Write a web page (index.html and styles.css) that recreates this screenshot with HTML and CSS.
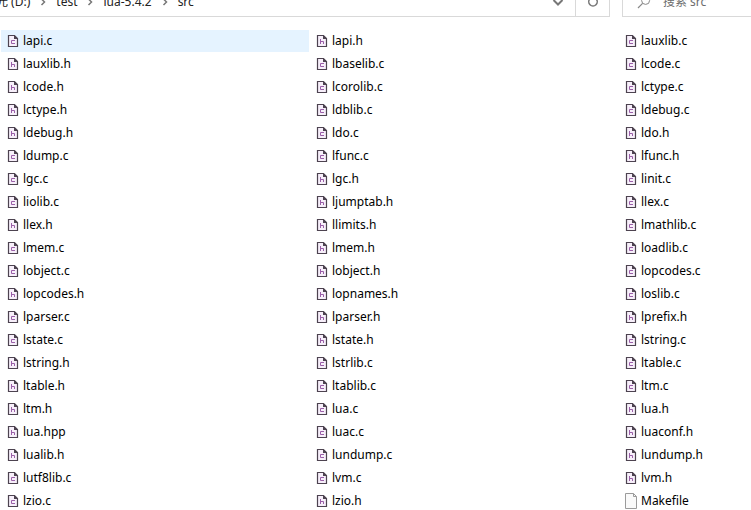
FILE: index.html
```html
<!DOCTYPE html>
<html lang="zh-CN">
<head>
<meta charset="utf-8">
<title>src</title>
<link rel="stylesheet" href="styles.css">
</head>
<body>
<svg class="sprite" aria-hidden="true">
  <symbol id="page" viewBox="0 0 12 14">
    <path d="M1.5 1.5H7.5L10.5 4.5V12.5H1.5Z" fill="#f7effa" stroke="#4d4350" stroke-width="1.2"/>
    <path d="M7 1L11 5H7Z" fill="#4d4350"/>
  </symbol>
  <symbol id="c" viewBox="0 0 12 14">
    <use href="#page"/>
    <path d="M8 6.5H4.5V9.5H8" fill="none" stroke="#9a5fa8"/>
  </symbol>
  <symbol id="h" viewBox="0 0 12 14">
    <use href="#page"/>
    <path d="M4.5 5V10M4.5 7.5H7.5V10" fill="none" stroke="#9a5fa8"/>
  </symbol>
  <symbol id="blank" viewBox="0 0 12 16">
    <path d="M.5 .5H8.5L11.5 3.5V15.5H.5Z" fill="#fafafa" stroke="#9b9b9b"/>
    <path d="M8.5 .5V3.5H11.5" fill="none" stroke="#9b9b9b"/>
  </symbol>
  <symbol id="chevron" viewBox="0 0 6 8">
    <path d="M1.5 1L4.5 4L1.5 7" fill="none" stroke="#777" stroke-width="1.5"/>
  </symbol>
</svg>
<header class="toolbar">
  <div class="address">
    <nav class="crumbs">
      <a class="crumb" href="#">光 (D:)</a>
      <svg class="chevron"><use href="#chevron"/></svg>
      <a class="crumb" href="#">test</a>
      <svg class="chevron"><use href="#chevron"/></svg>
      <a class="crumb" href="#">lua-5.4.2</a>
      <svg class="chevron"><use href="#chevron"/></svg>
      <a class="crumb" href="#">src</a>
    </nav>
    <button class="tool" aria-label="History"><svg width="12" height="8" viewBox="0 0 12 8"><path d="M1.5 2L6 6.5L10.5 2" fill="none" stroke="#777" stroke-width="2"/></svg></button>
    <button class="tool refresh" aria-label="Refresh"><svg width="12" height="12" viewBox="0 0 12 12"><path d="M3 2.8A4.2 4.2 0 1 0 9 2.8M6 1H10V5" fill="none" stroke="#777" stroke-width="1.6"/></svg></button>
  </div>
  <label class="search">
    <svg width="14" height="14" viewBox="0 0 14 14"><path d="M1 13L5.6 8.4" fill="none" stroke="#888" stroke-width="1.2"/><circle cx="8.6" cy="5.4" r="4" fill="none" stroke="#888"/></svg>
    <input class="query" type="search" aria-label="搜索 src" placeholder="搜索 src">
  </label>
</header>
<main>
<ul class="files">
  <li class="file selected"><svg class="icon"><use href="#c"/></svg>lapi.c</li>
  <li class="file"><svg class="icon"><use href="#h"/></svg>lauxlib.h</li>
  <li class="file"><svg class="icon"><use href="#h"/></svg>lcode.h</li>
  <li class="file"><svg class="icon"><use href="#h"/></svg>lctype.h</li>
  <li class="file"><svg class="icon"><use href="#h"/></svg>ldebug.h</li>
  <li class="file"><svg class="icon"><use href="#c"/></svg>ldump.c</li>
  <li class="file"><svg class="icon"><use href="#c"/></svg>lgc.c</li>
  <li class="file"><svg class="icon"><use href="#c"/></svg>liolib.c</li>
  <li class="file"><svg class="icon"><use href="#h"/></svg>llex.h</li>
  <li class="file"><svg class="icon"><use href="#c"/></svg>lmem.c</li>
  <li class="file"><svg class="icon"><use href="#c"/></svg>lobject.c</li>
  <li class="file"><svg class="icon"><use href="#h"/></svg>lopcodes.h</li>
  <li class="file"><svg class="icon"><use href="#c"/></svg>lparser.c</li>
  <li class="file"><svg class="icon"><use href="#c"/></svg>lstate.c</li>
  <li class="file"><svg class="icon"><use href="#h"/></svg>lstring.h</li>
  <li class="file"><svg class="icon"><use href="#h"/></svg>ltable.h</li>
  <li class="file"><svg class="icon"><use href="#h"/></svg>ltm.h</li>
  <li class="file"><svg class="icon"><use href="#h"/></svg>lua.hpp</li>
  <li class="file"><svg class="icon"><use href="#h"/></svg>lualib.h</li>
  <li class="file"><svg class="icon"><use href="#c"/></svg>lutf8lib.c</li>
  <li class="file"><svg class="icon"><use href="#c"/></svg>lzio.c</li>
  <li class="file"><svg class="icon"><use href="#h"/></svg>lapi.h</li>
  <li class="file"><svg class="icon"><use href="#c"/></svg>lbaselib.c</li>
  <li class="file"><svg class="icon"><use href="#c"/></svg>lcorolib.c</li>
  <li class="file"><svg class="icon"><use href="#c"/></svg>ldblib.c</li>
  <li class="file"><svg class="icon"><use href="#c"/></svg>ldo.c</li>
  <li class="file"><svg class="icon"><use href="#c"/></svg>lfunc.c</li>
  <li class="file"><svg class="icon"><use href="#h"/></svg>lgc.h</li>
  <li class="file"><svg class="icon"><use href="#h"/></svg>ljumptab.h</li>
  <li class="file"><svg class="icon"><use href="#h"/></svg>llimits.h</li>
  <li class="file"><svg class="icon"><use href="#h"/></svg>lmem.h</li>
  <li class="file"><svg class="icon"><use href="#h"/></svg>lobject.h</li>
  <li class="file"><svg class="icon"><use href="#h"/></svg>lopnames.h</li>
  <li class="file"><svg class="icon"><use href="#h"/></svg>lparser.h</li>
  <li class="file"><svg class="icon"><use href="#h"/></svg>lstate.h</li>
  <li class="file"><svg class="icon"><use href="#c"/></svg>lstrlib.c</li>
  <li class="file"><svg class="icon"><use href="#c"/></svg>ltablib.c</li>
  <li class="file"><svg class="icon"><use href="#c"/></svg>lua.c</li>
  <li class="file"><svg class="icon"><use href="#c"/></svg>luac.c</li>
  <li class="file"><svg class="icon"><use href="#c"/></svg>lundump.c</li>
  <li class="file"><svg class="icon"><use href="#c"/></svg>lvm.c</li>
  <li class="file"><svg class="icon"><use href="#h"/></svg>lzio.h</li>
  <li class="file"><svg class="icon"><use href="#c"/></svg>lauxlib.c</li>
  <li class="file"><svg class="icon"><use href="#c"/></svg>lcode.c</li>
  <li class="file"><svg class="icon"><use href="#c"/></svg>lctype.c</li>
  <li class="file"><svg class="icon"><use href="#c"/></svg>ldebug.c</li>
  <li class="file"><svg class="icon"><use href="#h"/></svg>ldo.h</li>
  <li class="file"><svg class="icon"><use href="#h"/></svg>lfunc.h</li>
  <li class="file"><svg class="icon"><use href="#c"/></svg>linit.c</li>
  <li class="file"><svg class="icon"><use href="#c"/></svg>llex.c</li>
  <li class="file"><svg class="icon"><use href="#c"/></svg>lmathlib.c</li>
  <li class="file"><svg class="icon"><use href="#c"/></svg>loadlib.c</li>
  <li class="file"><svg class="icon"><use href="#c"/></svg>lopcodes.c</li>
  <li class="file"><svg class="icon"><use href="#c"/></svg>loslib.c</li>
  <li class="file"><svg class="icon"><use href="#h"/></svg>lprefix.h</li>
  <li class="file"><svg class="icon"><use href="#c"/></svg>lstring.c</li>
  <li class="file"><svg class="icon"><use href="#c"/></svg>ltable.c</li>
  <li class="file"><svg class="icon"><use href="#c"/></svg>ltm.c</li>
  <li class="file"><svg class="icon"><use href="#h"/></svg>lua.h</li>
  <li class="file"><svg class="icon"><use href="#h"/></svg>luaconf.h</li>
  <li class="file"><svg class="icon"><use href="#h"/></svg>lundump.h</li>
  <li class="file"><svg class="icon"><use href="#h"/></svg>lvm.h</li>
  <li class="file"><svg class="icon plain"><use href="#blank"/></svg>Makefile</li>
</ul>
</main>
</body>
</html>
```
FILE: styles.css
```css
* { box-sizing: border-box; }
body {
  margin: 0;
  overflow: hidden;
  background: #fff;
  color: #000;
  font: 12px/16px "Noto Sans", "Noto Sans CJK SC", sans-serif;
}
.sprite { display: none; }

.toolbar {
  display: flex;
  align-items: flex-end;
  gap: 12px;
  height: 17px;
  overflow: hidden;
}
.address, .search {
  display: flex;
  flex-shrink: 0;
  align-items: center;
  height: 30px;
  border: 1px solid #d9d9d9;
}
.address { flex: 1; border-left: 0; }
.crumbs {
  display: flex;
  flex: 1;
  align-items: center;
  gap: 10px;
  margin-left: -4px;
  white-space: nowrap;
}
.crumb { color: #222; text-decoration: none; }
.chevron { width: 6px; height: 8px; }
.tool {
  display: flex;
  align-items: center;
  justify-content: center;
  width: 34px;
  height: 100%;
  padding: 0;
  border: 0;
  background: none;
}
.refresh { border-left: 1px solid #d9d9d9; }
.search {
  gap: 12px;
  width: 129px;
  padding-left: 14px;
  border-right: 0;
}
.query {
  flex: 1;
  min-width: 0;
  padding: 0;
  border: 0;
  outline: 0;
  background: none;
  font: inherit;
}
.query::placeholder { color: #6d6d6d; }

.files {
  display: grid;
  grid-template-rows: repeat(21, 22px);
  grid-template-columns: 308px 308px 1fr;
  grid-auto-flow: column;
  gap: 1px;
  margin: 0;
  padding: 13px 0 0 1px;
  list-style: none;
}
.file {
  display: flex;
  align-items: center;
  gap: 4px;
  padding-left: 6px;
}
.selected { background: #e5f3ff; }
.icon { width: 12px; height: 14px; }
.plain { height: 16px; }
```
